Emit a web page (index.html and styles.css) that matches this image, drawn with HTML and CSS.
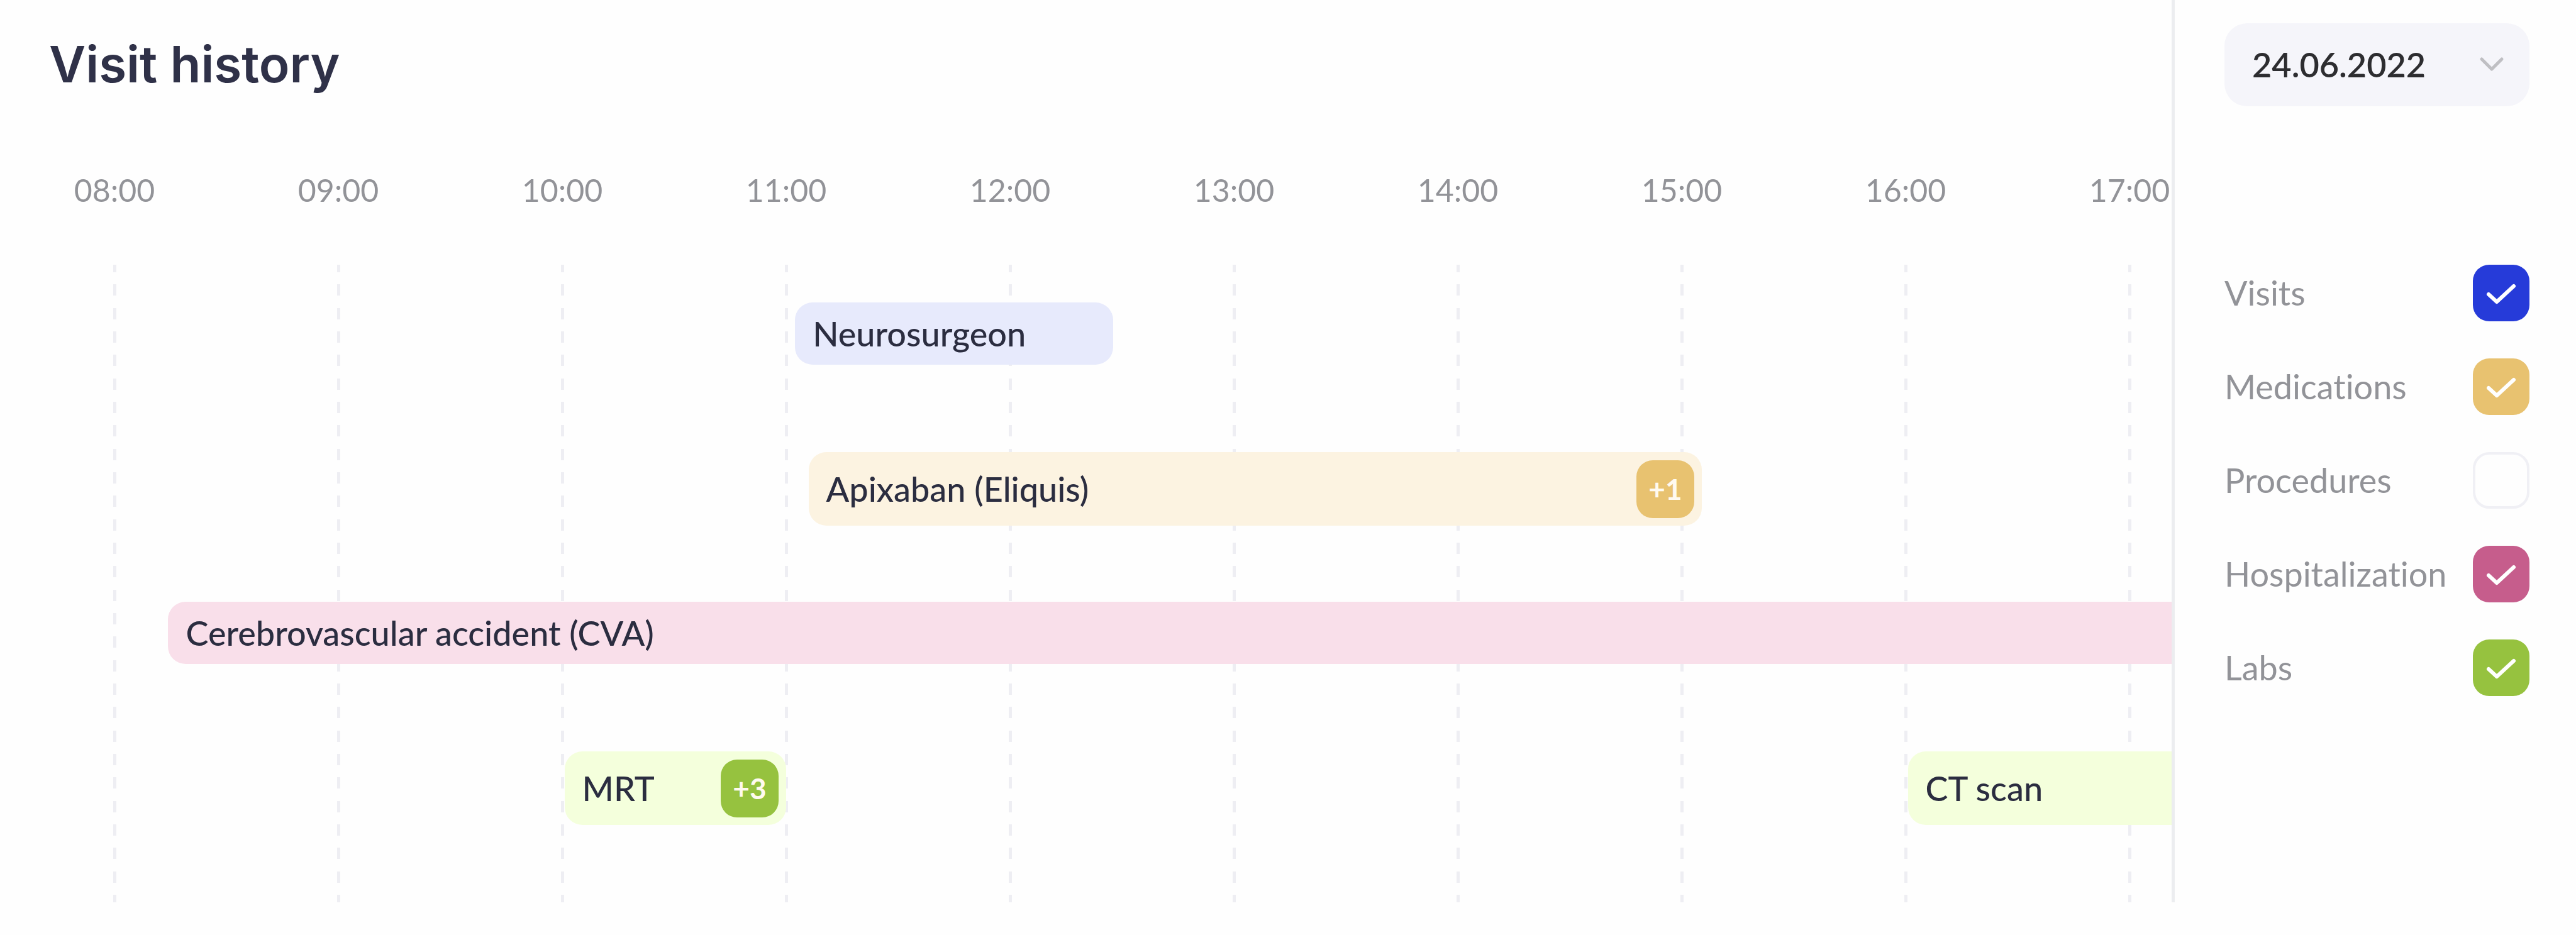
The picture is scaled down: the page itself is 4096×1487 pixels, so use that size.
FILE: index.html
```html
<!DOCTYPE html>
<html lang="en">
<head>
<meta charset="utf-8">
<meta name="viewport" content="width=device-width, initial-scale=1">
<title>Visit history</title>
<link rel="stylesheet" href="styles.css">
</head>
<body>
<main class="history">
  <section class="timeline">
    <h1 class="title">Visit history</h1>
    <div class="track">
      <div class="hours">
        <time>08:00</time><time>09:00</time><time>10:00</time><time>11:00</time><time>12:00</time>
        <time>13:00</time><time>14:00</time><time>15:00</time><time>16:00</time><time>17:00</time>
      </div>
      <div class="plot">
        <div class="gridlines" aria-hidden="true"><i></i><i></i><i></i><i></i><i></i><i></i><i></i><i></i><i></i><i></i></div>
        <div class="lanes">
          <div class="lane">
            <div class="event visit" style="--start: 11.04; --hours: 1.42">Neurosurgeon</div>
          </div>
          <div class="lane">
            <div class="event tall medication" style="--start: 11.1; --hours: 3.99">Apixaban (Eliquis)<span class="badge">+1</span></div>
          </div>
          <div class="lane">
            <div class="event hospital" style="--start: 8.24; --hours: 9.26">Cerebrovascular accident (CVA)</div>
          </div>
          <div class="lane">
            <div class="event tall lab" style="--start: 10.01; --hours: 0.99">MRT<span class="badge">+3</span></div>
            <div class="event tall lab" style="--start: 16.01; --hours: 1.49">CT scan</div>
          </div>
        </div>
      </div>
    </div>
  </section>
  <aside class="filters">
    <div class="date">
      <select class="date-select" aria-label="Date"><option>24.06.2022</option></select>
      <svg class="chevron" viewBox="0 0 40 26" aria-hidden="true"><path d="M4 4 20 20 36 4"/></svg>
    </div>
    <div class="legend">
      <label class="option"><span>Visits</span><span class="check visits"><input type="checkbox" checked><svg viewBox="0 0 90 90" aria-hidden="true"><path d="M25 47 38 59 65 34"/></svg></span></label>
      <label class="option"><span>Medications</span><span class="check medications"><input type="checkbox" checked><svg viewBox="0 0 90 90" aria-hidden="true"><path d="M25 47 38 59 65 34"/></svg></span></label>
      <label class="option"><span>Procedures</span><span class="check procedures"><input type="checkbox"><svg viewBox="0 0 90 90" aria-hidden="true"><path d="M25 47 38 59 65 34"/></svg></span></label>
      <label class="option"><span>Hospitalization</span><span class="check hospitalization"><input type="checkbox" checked><svg viewBox="0 0 90 90" aria-hidden="true"><path d="M25 47 38 59 65 34"/></svg></span></label>
      <label class="option"><span>Labs</span><span class="check labs"><input type="checkbox" checked><svg viewBox="0 0 90 90" aria-hidden="true"><path d="M25 47 38 59 65 34"/></svg></span></label>
    </div>
  </aside>
</main>
</body>
</html>
```
FILE: styles.css
```css
* {
  box-sizing: border-box;
}

body {
  margin: 0;
  background: #fefefe;
  color: #2b2d40;
  font-family: Lato, "Liberation Sans", sans-serif;
  font-size: 54px;
  font-variant-ligatures: none;
  line-height: 64px;
}

.history {
  display: grid;
  grid-template-columns: minmax(0, 1fr) 643px;
}

.timeline {
  overflow: hidden;
  padding-top: 52px;
}

.title {
  margin: 0 0 118px;
  padding-left: 78px;
  font-family: Inter, "Liberation Sans", sans-serif;
  font-size: 80px;
  font-weight: 600;
  line-height: 100px;
  color: #2f3148;
}

/* Ten one-hour columns; the last one runs under the panel edge. */
.track {
  width: 103.1%;
  margin-left: 4px;
}

.hours,
.gridlines {
  display: grid;
  grid-template-columns: repeat(10, 1fr);
  justify-items: center;
}

.hours {
  margin-bottom: 87px;
  font-size: 50px;
  color: #929398;
}

.plot {
  display: grid;
}

.gridlines,
.lanes {
  grid-area: 1 / 1;
}

.gridlines i {
  width: 5px;
  background: repeating-linear-gradient(
    #eeeef3 0 12px, transparent 12px 31px,
    #eeeef3 31px 49px, transparent 49px 69px,
    #eeeef3 69px 87px, transparent 87px 106px,
    #eeeef3 106px 112px);
}

.lanes {
  padding: 60px 0 2px;
}

.lane {
  display: grid;
  align-items: start;
  height: 238px;
}

.event {
  grid-area: 1 / 1;
  display: flex;
  align-items: center;
  justify-content: space-between;
  width: calc(var(--hours) * 10%);
  height: 99px;
  margin-left: calc((var(--start) - 7.5) * 10%);
  padding: 0 12px 0 28px;
  border-radius: 28px;
  font-weight: 500;
  white-space: nowrap;
}

.tall {
  height: 117px;
}

.visit { background: #e7eafc; }
.medication { background: #fcf3e1; }
.hospital { background: #f9dfea; }
.lab { background: #f4ffdc; }

.badge {
  display: grid;
  place-items: center;
  width: 92px;
  height: 92px;
  border-radius: 26px;
  font-size: 46px;
  font-weight: 700;
  color: #fffaf0;
}

.medication .badge { background: #e8c270; }
.lab .badge { background: #96c23f; }

.filters {
  padding: 37px 74px 0 79px;
  border-left: 5px solid #ecedf0;
}

.date {
  position: relative;
  margin-bottom: 252px;
}

.date-select {
  appearance: none;
  display: block;
  width: 100%;
  height: 132px;
  padding: 0 44px;
  border: 0;
  border-radius: 36px;
  background: #f5f5fa;
  color: #2d2d30;
  font: inherit;
  font-weight: 600;
}

.chevron {
  position: absolute;
  top: 53px;
  right: 40px;
  width: 40px;
  height: 26px;
  fill: none;
  stroke: #bfbfc3;
  stroke-width: 5;
  stroke-linecap: round;
  stroke-linejoin: round;
  pointer-events: none;
}

.legend {
  display: grid;
  gap: 59px;
}

.option {
  display: flex;
  align-items: center;
  justify-content: space-between;
  color: #929398;
}

.check {
  display: grid;
}

.check input,
.check svg {
  grid-area: 1 / 1;
  width: 90px;
  height: 90px;
  margin: 0;
}

.check input {
  appearance: none;
  border: 4px solid #f0f0f5;
  border-radius: 26px;
}

.check input:checked {
  border: 0;
  background: var(--fill);
}

.check svg {
  fill: none;
  stroke: #ffffff;
  stroke-width: 6;
  stroke-linecap: round;
  stroke-linejoin: round;
  pointer-events: none;
}

.check input:not(:checked) + svg {
  visibility: hidden;
}

.visits { --fill: #263bd9; }
.medications { --fill: #e8c270; }
.hospitalization { --fill: #c65d8c; }
.labs { --fill: #96c23f; }
```
